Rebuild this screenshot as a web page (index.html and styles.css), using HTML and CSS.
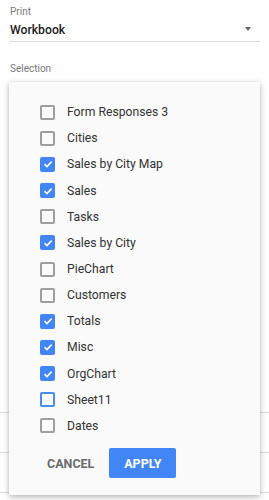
FILE: index.html
```html
<!DOCTYPE html>
<html>
<head>
<meta charset="utf-8">
<link rel="stylesheet" href="styles.css">
</head>
<body>
<div class="page">
  <div class="field">
    <div class="label">Print</div>
    <div class="select">
      <span class="value">Workbook</span>
      <span class="arrow"></span>
    </div>
  </div>
  <div class="label sel-label">Selection</div>
  <div class="spacer"></div>
  <div class="rule"></div>
  <div class="rule rule2"></div>
  <div class="rule rule3"></div>

  <div class="menu">
    <ul class="list">
      <li class="row"><span class="box"></span><span class="name">Form Responses 3</span></li>
      <li class="row"><span class="box"></span><span class="name">Cities</span></li>
      <li class="row"><span class="box checked"><svg viewBox="0 0 14 14"><path d="M3.5 7.2 L6 9.6 L10.6 4.6" /></svg></span><span class="name">Sales by City Map</span></li>
      <li class="row"><span class="box checked"><svg viewBox="0 0 14 14"><path d="M3.5 7.2 L6 9.6 L10.6 4.6" /></svg></span><span class="name">Sales</span></li>
      <li class="row"><span class="box"></span><span class="name">Tasks</span></li>
      <li class="row"><span class="box checked"><svg viewBox="0 0 14 14"><path d="M3.5 7.2 L6 9.6 L10.6 4.6" /></svg></span><span class="name">Sales by City</span></li>
      <li class="row"><span class="box"></span><span class="name">PieChart</span></li>
      <li class="row"><span class="box"></span><span class="name">Customers</span></li>
      <li class="row"><span class="box checked"><svg viewBox="0 0 14 14"><path d="M3.5 7.2 L6 9.6 L10.6 4.6" /></svg></span><span class="name">Totals</span></li>
      <li class="row"><span class="box checked"><svg viewBox="0 0 14 14"><path d="M3.5 7.2 L6 9.6 L10.6 4.6" /></svg></span><span class="name">Misc</span></li>
      <li class="row"><span class="box checked"><svg viewBox="0 0 14 14"><path d="M3.5 7.2 L6 9.6 L10.6 4.6" /></svg></span><span class="name">OrgChart</span></li>
      <li class="row"><span class="box focused"></span><span class="name">Sheet11</span></li>
      <li class="row"><span class="box"></span><span class="name">Dates</span></li>
    </ul>
    <div class="actions">
      <button class="btn cancel">CANCEL</button>
      <button class="btn apply">APPLY</button>
    </div>
  </div>
</div>
</body>
</html>
```

FILE: styles.css
```css
html, body {
  margin: 0;
  padding: 0;
  background: #ffffff;
}
body {
  font-family: Roboto, "Liberation Sans", Arial, sans-serif;
  color: #222;
}
.page {
  position: relative;
  width: 269px;
  height: 500px;
  overflow: hidden;
  padding: 0 9px;
  box-sizing: border-box;
}
.label {
  font-size: 10px;
  line-height: 12px;
  color: #7a7a7a;
  padding-left: 1px;
}
.field {
  padding-top: 6px;
}
.select {
  display: flex;
  align-items: center;
  justify-content: space-between;
  height: 23px;
  border-bottom: 1px solid #dcdcdc;
  padding: 0 9px 0 1px;
  margin-top: 0;
}
.value {
  font-size: 12.2px;
  font-weight: 500;
  color: #222;
  position: relative;
  top: 0;
}
.arrow {
  width: 0;
  height: 0;
  border-left: 3.5px solid transparent;
  border-right: 3.5px solid transparent;
  border-top: 4px solid #666;
  margin-top: -1px;
}
.sel-label {
  margin-top: 21px;
}
.spacer {
  height: 337px;
}
.rule {
  height: 0;
  border-top: 1px solid #dcdcdc;
  margin: 0 -9px;
}
.rule2 { margin-top: 39px; }
.rule3 { margin-top: 39px; }

.menu {
  position: absolute;
  left: 9px;
  top: 82px;
  width: 251px;
  height: 413px;
  background: #fafafa;
  box-shadow: 0 2px 6px rgba(0,0,0,0.28), 0 0 2px rgba(0,0,0,0.08);
  box-sizing: border-box;
  padding-top: 17px;
}
.list {
  list-style: none;
  margin: 0;
  padding: 0 0 0 31px;
}
.row {
  display: flex;
  align-items: center;
  height: 26.17px;
}
.box {
  width: 15px;
  height: 15px;
  box-sizing: border-box;
  border: 2px solid #9e9e9e;
  border-radius: 2px;
  flex: none;
  display: flex;
  align-items: center;
  justify-content: center;
}
.box.checked {
  background: #4285f4;
  border-color: #4285f4;
}
.box.focused {
  border-color: #4a8cf5;
}
.box svg {
  width: 14px;
  height: 14px;
  flex: none;
}
.box svg path {
  fill: none;
  stroke: #ffffff;
  stroke-width: 1.6;
}
.name {
  margin-left: 12px;
  font-size: 12.2px;
  color: #333;
}
.actions {
  display: flex;
  align-items: center;
  gap: 8px;
  margin-top: 9px;
  padding-left: 31px;
}
.btn {
  font-family: Roboto, "Liberation Sans", Arial, sans-serif;
  font-size: 12.5px;
  font-weight: 700;
  border: none;
  border-radius: 2px;
  height: 30px;
  cursor: pointer;
}
.cancel {
  background: transparent;
  color: #6b6b6b;
  padding: 0 7px;
}
.apply {
  background: #4285f4;
  color: #ffffff;
  width: 67px;
  padding: 0;
}
```
